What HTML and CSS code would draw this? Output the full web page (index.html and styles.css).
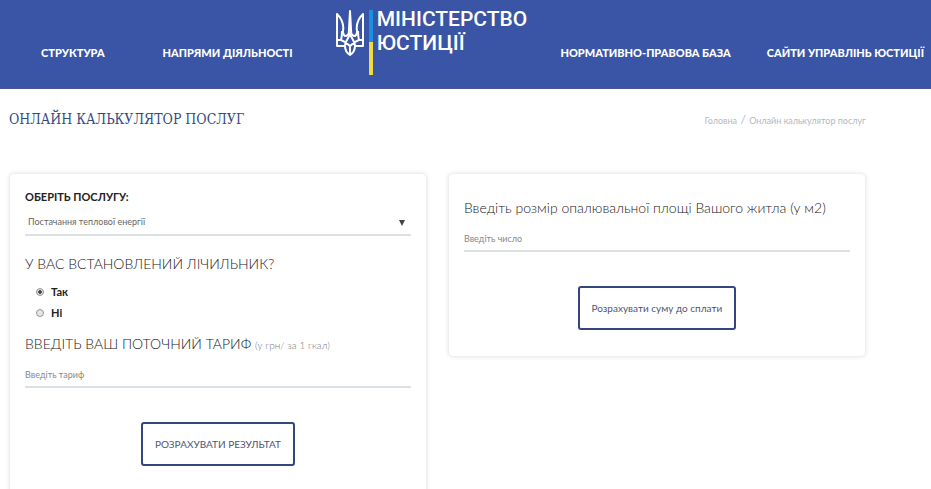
FILE: index.html
```html
<!DOCTYPE html>
<html lang="uk">
<head>
	<meta charset="utf-8">
	<title>Онлайн калькулятор послуг</title>
	<link rel="stylesheet" href="styles.css">
</head>
<body>
	<header class="header">
		<nav class="menu menu-left">
			<a href="#">СТРУКТУРА</a>
			<a href="#">НАПРЯМИ ДІЯЛЬНОСТІ</a>
		</nav>
		<a class="logo" href="#">
			<svg class="trident" viewBox="0 0 28 46" width="28" height="46" fill="none" stroke="#fff" stroke-width="2" stroke-linejoin="round">
				<path d="M1 4V36H9C9 40 11 43 14 45C17 43 19 40 19 36H27V4C22 9 20 15 21 21C21 25 20 26 18 26C15 25 15 23 15 19L14 1L13 19C13 23 13 25 10 26C8 26 7 25 7 21C8 15 6 9 1 4Z"/>
				<path d="M1 30H5C6 27 6 24 6 21M27 30H23C22 27 22 24 22 21M14 22C14 28 9 30 9 36M14 22C14 28 19 30 19 36M5 30C8 31 11 33 14 36C17 33 20 31 23 30M14 36V44"/>
			</svg>
			<span class="flag"></span>
			<span class="logo-text">МІНІСТЕРСТВО<br>ЮСТИЦІЇ</span>
		</a>
		<nav class="menu menu-right">
			<a href="#">НОРМАТИВНО-ПРАВОВА БАЗА</a>
			<a href="#">САЙТИ УПРАВЛІНЬ ЮСТИЦІЇ</a>
		</nav>
	</header>

	<main class="page">
		<div class="page-head">
			<h1>ОНЛАЙН КАЛЬКУЛЯТОР ПОСЛУГ</h1>
			<div class="breadcrumbs"><a href="#">Головна</a> <span>/</span> <a href="#">Онлайн калькулятор послуг</a></div>
		</div>

		<div class="cards">
			<form class="card">
				<label class="label" for="service">ОБЕРІТЬ ПОСЛУГУ:</label>
				<div class="select">
					<select class="field" id="service">
						<option>Постачання теплової енергії</option>
					</select>
					<svg class="arrow" viewBox="0 0 6 6" width="6" height="6"><path d="M0 0H6L3 6Z" fill="#444"/></svg>
				</div>
				<fieldset class="counter">
					<legend class="question">У ВАС ВСТАНОВЛЕНИЙ ЛІЧИЛЬНИК?</legend>
					<label class="radio"><input type="radio" name="counter" checked> Так</label>
					<label class="radio"><input type="radio" name="counter"> Ні</label>
				</fieldset>
				<label class="question" for="tariff">ВВЕДІТЬ ВАШ ПОТОЧНИЙ ТАРИФ <small>(у грн/ за 1 гкал)</small></label>
				<input class="field" id="tariff" type="text" placeholder="Введіть тариф">
				<button class="btn" type="button">РОЗРАХУВАТИ РЕЗУЛЬТАТ</button>
			</form>

			<form class="card card-area">
				<label class="question" for="area">Введіть розмір опалювальної площі Вашого житла (у м2)</label>
				<input class="field" id="area" type="text" placeholder="Введіть число">
				<button class="btn" type="button">Розрахувати суму до сплати</button>
			</form>
		</div>
	</main>
</body>
</html>
```
FILE: styles.css
```css
* {
	box-sizing: border-box;
}

body {
	margin: 0;
	background: #fff;
	color: #222;
	font-family: Lato, "Open Sans", sans-serif;
	font-size: 9px;
}

a {
	color: inherit;
	text-decoration: none;
}

/* header */
.header {
	display: flex;
	justify-content: space-between;
	height: 89px;
	padding: 0 7px 0 41px;
	background: #3a55a5;
	border-bottom: 1px solid #4a5590;
	color: #fff;
}

.menu {
	display: flex;
	padding-top: 46px;
	font-size: 11px;
	line-height: 14px;
	font-weight: 900;
	white-space: nowrap;
}

.menu-left {
	gap: 58px;
}

.menu-right {
	gap: 36px;
}

.logo {
	display: flex;
	margin-left: 10px;
	padding-top: 10px;
}

.flag {
	width: 4px;
	height: 65px;
	margin: 0 4px 0 5px;
	background: linear-gradient(#1b8fe0 50%, #f0dc3c 50%);
}

.logo-text {
	font-family: Roboto, sans-serif;
	font-size: 21px;
	line-height: 24px;
	font-weight: 500;
	margin-top: -3px;
}

/* title row */
.page {
	padding: 0 7% 0 9px;
}

.page-head {
	display: flex;
	justify-content: space-between;
	align-items: center;
	height: 84px;
	padding-bottom: 24px;
}

h1 {
	margin: 0;
	color: #364a80;
	font-family: "DejaVu Serif Condensed", "DejaVu Serif", serif;
	font-size: 14px;
	line-height: 20px;
	font-weight: 400;
}

.breadcrumbs {
	color: #b4b7c4;
}

.breadcrumbs span {
	margin: 0 1px;
	font-size: 12px;
}

/* calculator */
.cards {
	display: grid;
	grid-template-columns: 1fr 1fr;
	gap: 21px;
	align-items: start;
}

.card {
	display: flex;
	flex-direction: column;
	padding: 15px 15px 30px;
	border: 1px solid #eeeff1;
	border-radius: 5px;
	box-shadow: 0 0 4px #e4e5ea;
}

.label {
	font-size: 11px;
	line-height: 16px;
	font-weight: 700;
}

.select {
	position: relative;
	margin-top: 5px;
}

.field {
	display: block;
	width: 100%;
	height: 26px;
	padding: 0;
	border: 0;
	border-bottom: 2px solid #dce1e6;
	border-radius: 0;
	background: none;
	color: #666;
	font: 400 9px/16px Lato, sans-serif;
	appearance: none;
}

select.field {
	padding-left: 3px;
}

.field::placeholder {
	color: #888;
}

.arrow {
	position: absolute;
	top: 10px;
	right: 6px;
}

.counter {
	margin: 0;
	padding: 0;
	border: 0;
}

.question {
	padding: 0;
	font-size: 14px;
	line-height: 20px;
	font-weight: 300;
}

.counter .question {
	padding: 18px 0 7px;
}

.question small {
	color: #777;
	font-size: 10px;
}

.radio {
	display: flex;
	align-items: center;
	gap: 7px;
	height: 21px;
	padding-left: 11px;
	font-size: 11px;
	font-weight: 700;
}

.radio input {
	width: 8px;
	height: 8px;
	margin: 0;
	appearance: none;
	border: 1px solid #999;
	border-radius: 50%;
	background: #e4e4e4;
}

.radio input:checked {
	background: radial-gradient(#444 35%, #ddd 50%);
}

.counter + .question {
	margin: 11px 0 7px;
}

.btn {
	align-self: center;
	height: 44px;
	margin-top: 34px;
	padding: 0 12px;
	border: 2px solid #34457f;
	border-radius: 3px;
	background: #fff;
	color: #4c5578;
	font: 400 10px Lato, sans-serif;
}

.card-area {
	padding: 24px 15px 26px;
}

.card-area .question {
	margin-bottom: 8px;
}
```
